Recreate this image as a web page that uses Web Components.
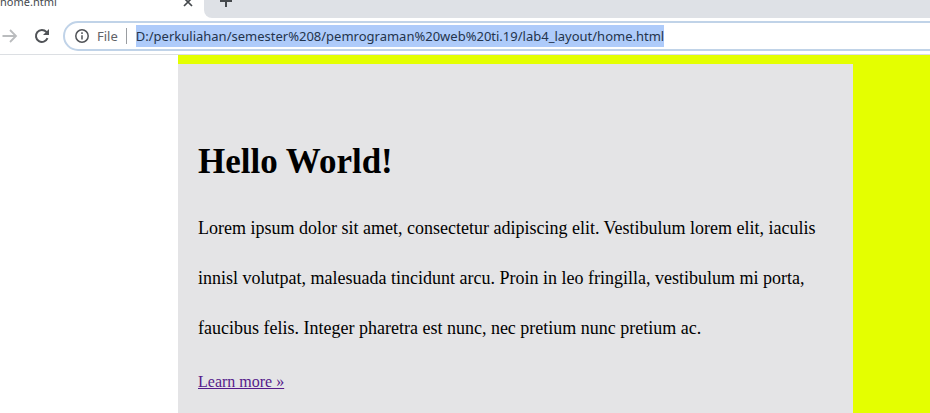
<!DOCTYPE html>
<html lang="en">
<head>
<meta charset="utf-8">
<title>home.html</title>
<style>
html, body { height: 100%; }
body { margin: 0; background: #fff; overflow: hidden; }
</style>
</head>
<body>
<browser-window>
  <tab-strip slot="chrome">home.html</tab-strip>
  <nav-toolbar slot="chrome" url="D:/perkuliahan/semester%208/pemrograman%20web%20ti.19/lab4_layout/home.html"></nav-toolbar>
  <page-container>
    <hero-card>
      <span slot="title">Hello World!</span>
      Lorem ipsum dolor sit amet, consectetur adipiscing elit. Vestibulum lorem elit, iaculis innisl volutpat, malesuada tincidunt arcu. Proin in leo fringilla, vestibulum mi porta, faucibus felis. Integer pharetra est nunc, nec pretium nunc pretium ac.
      <span slot="link">Learn more »</span>
    </hero-card>
  </page-container>
</browser-window>
<script>
const define = (name, markup, setup) => customElements.define(name, class extends HTMLElement {
  constructor() {
    super();
    this.attachShadow({ mode: "open" }).innerHTML = markup;
  }
  connectedCallback() { if (setup) setup(this); }
});

define("browser-window", `
<style>
  :host { display: flex; flex-direction: column; height: 100%; overflow: hidden; }
  header { flex: none; border-bottom: 1px solid #dcdfe3; }
  main { flex: 1; min-height: 0; display: flex; }
  ::slotted(page-container) { flex: 1; }
</style>
<header><slot name="chrome"></slot></header>
<main><slot></slot></main>`);

define("tab-strip", `
<style>
  :host { display: flex; align-items: flex-end; height: 18px; overflow: hidden; background: #fff;
    font-family: "Noto Sans", "Open Sans", sans-serif; font-size: 11px; line-height: 16px; color: #45494d; }
  .tab { width: 204px; box-sizing: border-box; display: flex; justify-content: space-between; align-items: center; padding: 0 10px 8px 0; }
  .rest { flex: 1; height: 100%; box-sizing: border-box; padding-left: 14px; background: #dee1e6; border-bottom-left-radius: 8px; display: flex; align-items: flex-end; padding-bottom: 8px; }
  button { border: 0; padding: 0; background: none; color: #45494d; display: block; }
  svg { display: block; fill: none; stroke: currentColor; }
</style>
<div class="tab"><slot></slot>
  <button aria-label="Close tab"><svg width="12" height="12" viewBox="0 0 12 12" stroke-width="1.7"><path d="M2 2l8 8M10 2l-8 8"/></svg></button>
</div>
<div class="rest"><button aria-label="New tab"><svg width="16" height="16" viewBox="0 0 16 16" stroke-width="2"><path d="M8 1v12M2 7h12"/></svg></button></div>`);

define("nav-toolbar", `
<style>
  :host { display: flex; align-items: center; height: 36px; background: #fff; overflow: hidden;
    font-family: "Noto Sans", "Open Sans", sans-serif; font-size: 13px; line-height: 22px; }
  button { flex: none; border: 0; padding: 0; background: none; display: block; }
  svg { display: block; fill: none; stroke: currentColor; }
  .forward { color: #babcbe; margin-left: 1px; }
  .reload { color: #505357; margin-left: 15px; }
  .box { flex: 1; min-width: 0; box-sizing: border-box; height: 30px; margin: 0 -20px 0 13px; padding-left: 10px;
    border: 2px solid #c0d3e8; border-radius: 15px; display: flex; align-items: center; color: #5f6368; }
  .info { color: #505357; }
  label { padding: 0 8px; }
  .rule { width: 1px; height: 16px; background: #9a9da1; margin-right: 9px; }
  input { field-sizing: content; border: 0; padding: 0; margin: 0; height: 22px; outline: 0;
    font: inherit; color: #24344c; background: #aecbfa; }
</style>
<button class="forward" aria-label="Forward"><svg width="18" height="18" viewBox="0 0 18 18" stroke-width="1.8"><path d="M1.5 9h13.5M9 3l6 6-6 6"/></svg></button>
<button class="reload" aria-label="Reload"><svg width="16" height="16" viewBox="0 0 16 16" stroke-width="2"><path d="M13.5 10.2A6 6 0 1 1 12.4 3.9L14 5.5"/><path d="M15 1v6H9z" fill="currentColor" stroke="none"/></svg></button>
<div class="box">
  <svg class="info" width="14" height="14" viewBox="0 0 14 14" stroke-width="1.5"><circle cx="7" cy="7" r="6.2"/><path d="M7 6.2v4.3M7 3.3v1.6"/></svg>
  <label for="url">File</label><span class="rule"></span>
  <input id="url" type="text" spellcheck="false">
</div>`, el => { el.shadowRoot.querySelector("input").value = el.getAttribute("url"); });

define("page-container", `
<style>
  :host { display: flex; margin-left: 178px; padding: 9px 77px 0 0; background: #e4ff00; min-width: 0; }
  ::slotted(*) { flex: 1; min-width: 0; }
</style>
<slot></slot>`);

define("hero-card", `
<style>
  :host { display: block; box-sizing: border-box; padding: 77px 20px 20px; background: #e4e4e6; color: #000;
    font-family: "Liberation Serif", "Times New Roman", serif; }
  h1 { margin: 0; font-size: 35px; line-height: 42px; }
  p { margin: 20px 0 16px; font-size: 18px; line-height: 50px; }
  a { font-size: 16px; line-height: 26px; color: #551a8b; display: inline-block; }
</style>
<h1><slot name="title"></slot></h1>
<p><slot></slot></p>
<a href="#"><slot name="link"></slot></a>`);
</script>
</body>
</html>
